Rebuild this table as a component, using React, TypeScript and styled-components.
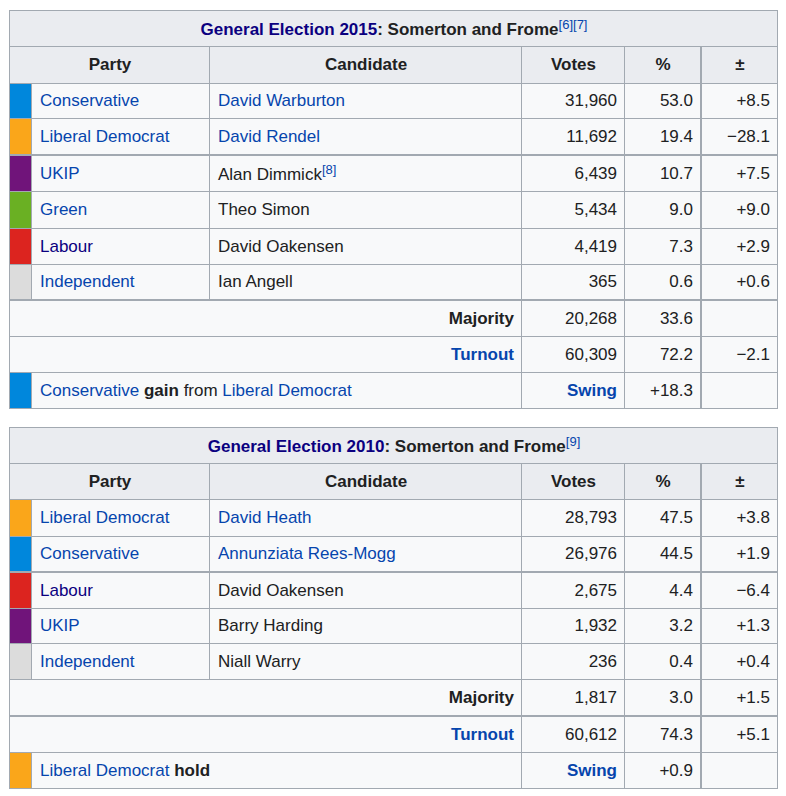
import React from "react";
import styled, { createGlobalStyle } from "styled-components";

const GlobalStyle = createGlobalStyle`
  html, body { margin: 0; padding: 0; background: #ffffff; }
  body {
    font-family: "Liberation Sans", Arial, sans-serif;
    font-size: 17px;
    color: #202122;
  }
  * { box-sizing: border-box; }
`;

const BORDER = "#a2a9b1";

const Page = styled.div`
  padding: 10px 9px;
  display: flex;
  flex-direction: column;
  gap: 18px;
`;

const ElectionBox = styled.div<{ $rows: string }>`
  display: grid;
  grid-template-columns: 22px 178px 312px 103px 77px 76px;
  grid-template-rows: ${(p) => p.$rows};
  width: 769px;
  border-top: 1px solid ${BORDER};
  border-left: 1px solid ${BORDER};
`;

type Align = "left" | "right" | "center";

const CellBox = styled.div<{
  $span: number;
  $align: Align;
  $bb: number;
  $br: number;
  $head: boolean;
  $bold: boolean;
}>`
  grid-column: span ${(p) => p.$span};
  display: flex;
  align-items: center;
  justify-content: ${(p) =>
    p.$align === "right" ? "flex-end" : p.$align === "center" ? "center" : "flex-start"};
  padding: 0 7px 0 8px;
  background: ${(p) => (p.$head ? "#eaecf0" : "#f8f9fa")};
  border-right: ${(p) => p.$br}px solid ${BORDER};
  border-bottom: ${(p) => p.$bb}px solid ${BORDER};
  font-weight: ${(p) => (p.$bold || p.$head ? "bold" : "normal")};
  white-space: nowrap;
  line-height: 20px;
`;

const Swatch = styled.div<{ $color: string; $bb: number }>`
  background: ${(p) => p.$color};
  border-right: 1px solid ${BORDER};
  border-bottom: ${(p) => p.$bb}px solid ${BORDER};
`;

const WikiLink = styled.span<{ $visited?: boolean }>`
  color: ${(p) => (p.$visited ? "#0b0080" : "#0645ad")};
  cursor: pointer;
`;

const Ref = styled.sup`
  font-size: 13px;
  font-weight: normal;
  line-height: 1;
  vertical-align: 6px;
  color: #0645ad;
`;

const Strong = styled.b`
  font-weight: bold;
`;

type CellProps = {
  span?: number;
  align?: Align;
  bb?: number;
  br?: number;
  head?: boolean;
  bold?: boolean;
  children?: React.ReactNode;
};

const Cell = ({ span = 1, align = "left", bb = 1, br = 1, head = false, bold = false, children }: CellProps) => (
  <CellBox $span={span} $align={align} $bb={bb} $br={br} $head={head} $bold={bold}>
    <span>{children}</span>
  </CellBox>
);

type Candidate = {
  color: string;
  party: string;
  partyVisited?: boolean;
  name: React.ReactNode;
  votes: string;
  pct: string;
  change: string;
  thick?: boolean;
};

type Election = {
  year: string;
  refs: string;
  rows: string;
  candidates: Candidate[];
  majority: [string, string, string];
  majorityThick?: boolean;
  turnout: [string, string, string];
  result: { color: string; content: React.ReactNode; swing: string };
};

const elections: Election[] = [
  {
    year: "2015",
    refs: "[6][7]",
    rows: "36px 37px 35px 37px 36px 37px 36px 36px 36px 36px 36px",
    candidates: [
      { color: "#0087dc", party: "Conservative", name: <WikiLink>David Warburton</WikiLink>, votes: "31,960", pct: "53.0", change: "+8.5" },
      { color: "#faa61a", party: "Liberal Democrat", name: <WikiLink>David Rendel</WikiLink>, votes: "11,692", pct: "19.4", change: "\u221228.1", thick: true },
      { color: "#70147a", party: "UKIP", name: <>Alan Dimmick<Ref>[8]</Ref></>, votes: "6,439", pct: "10.7", change: "+7.5" },
      { color: "#6ab023", party: "Green", name: "Theo Simon", votes: "5,434", pct: "9.0", change: "+9.0" },
      { color: "#dc241f", party: "Labour", partyVisited: true, name: "David Oakensen", votes: "4,419", pct: "7.3", change: "+2.9" },
      { color: "#dcdcdc", party: "Independent", name: "Ian Angell", votes: "365", pct: "0.6", change: "+0.6", thick: true },
    ],
    majority: ["20,268", "33.6", ""],
    turnout: ["60,309", "72.2", "\u22122.1"],
    result: {
      color: "#0087dc",
      content: (
        <>
          <WikiLink>Conservative</WikiLink> <Strong>gain</Strong> from <WikiLink>Liberal Democrat</WikiLink>
        </>
      ),
      swing: "+18.3",
    },
  },
  {
    year: "2010",
    refs: "[9]",
    rows: "36px 36px 37px 36px 36px 35px 36px 37px 36px 36px",
    candidates: [
      { color: "#faa61a", party: "Liberal Democrat", name: <WikiLink>David Heath</WikiLink>, votes: "28,793", pct: "47.5", change: "+3.8" },
      { color: "#0087dc", party: "Conservative", name: <WikiLink>Annunziata Rees-Mogg</WikiLink>, votes: "26,976", pct: "44.5", change: "+1.9", thick: true },
      { color: "#dc241f", party: "Labour", partyVisited: true, name: "David Oakensen", votes: "2,675", pct: "4.4", change: "\u22126.4" },
      { color: "#70147a", party: "UKIP", name: "Barry Harding", votes: "1,932", pct: "3.2", change: "+1.3" },
      { color: "#dcdcdc", party: "Independent", name: "Niall Warry", votes: "236", pct: "0.4", change: "+0.4" },
    ],
    majority: ["1,817", "3.0", "+1.5"],
    majorityThick: true,
    turnout: ["60,612", "74.3", "+5.1"],
    result: {
      color: "#faa61a",
      content: (
        <>
          <WikiLink>Liberal Democrat</WikiLink> <Strong>hold</Strong>
        </>
      ),
      swing: "+0.9",
    },
  },
];

const ElectionTable = ({ e }: { e: Election }) => {
  const mb = e.majorityThick ? 2 : 1;
  return (
    <ElectionBox $rows={e.rows}>
      <Cell span={6} head align="center">
        <WikiLink $visited>General Election {e.year}</WikiLink>: Somerton and Frome<Ref>{e.refs}</Ref>
      </Cell>

      <Cell span={2} head align="center">Party</Cell>
      <Cell head align="center">Candidate</Cell>
      <Cell head align="center">Votes</Cell>
      <Cell head align="center" br={2}>%</Cell>
      <Cell head align="center">±</Cell>

      {e.candidates.map((c) => {
        const bb = c.thick ? 2 : 1;
        return (
          <React.Fragment key={c.party}>
            <Swatch $color={c.color} $bb={bb} />
            <Cell bb={bb}>
              <WikiLink $visited={c.partyVisited}>{c.party}</WikiLink>
            </Cell>
            <Cell bb={bb}>{c.name}</Cell>
            <Cell bb={bb} align="right">{c.votes}</Cell>
            <Cell bb={bb} align="right" br={2}>{c.pct}</Cell>
            <Cell bb={bb} align="right">{c.change}</Cell>
          </React.Fragment>
        );
      })}

      <Cell span={3} align="right" bold bb={mb}>Majority</Cell>
      <Cell align="right" bb={mb}>{e.majority[0]}</Cell>
      <Cell align="right" br={2} bb={mb}>{e.majority[1]}</Cell>
      <Cell align="right" bb={mb}>{e.majority[2]}</Cell>

      <Cell span={3} align="right" bold>
        <WikiLink>Turnout</WikiLink>
      </Cell>
      <Cell align="right">{e.turnout[0]}</Cell>
      <Cell align="right" br={2}>{e.turnout[1]}</Cell>
      <Cell align="right">{e.turnout[2]}</Cell>

      <Swatch $color={e.result.color} $bb={1} />
      <Cell span={2}>{e.result.content}</Cell>
      <Cell align="right" bold>
        <WikiLink>Swing</WikiLink>
      </Cell>
      <Cell align="right" br={2}>{e.result.swing}</Cell>
      <Cell />
    </ElectionBox>
  );
};

export default function App() {
  return (
    <>
      <GlobalStyle />
      <Page>
        {elections.map((e) => (
          <ElectionTable key={e.year} e={e} />
        ))}
      </Page>
    </>
  );
}
